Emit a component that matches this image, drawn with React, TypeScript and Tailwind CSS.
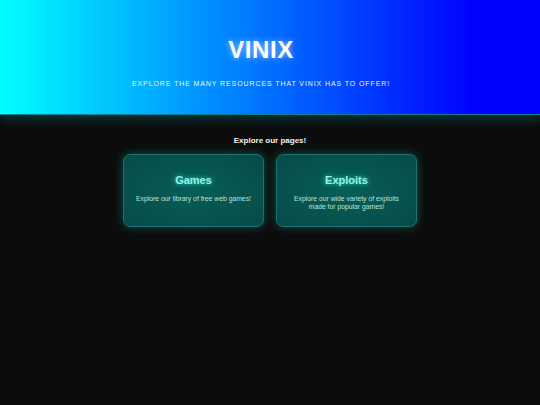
import React from 'react';

interface PageCard {
  title: string;
  description: string;
}

const cards: PageCard[] = [
  { title: 'Games', description: 'Explore our library of free web games!' },
  { title: 'Exploits', description: 'Explore our wide variety of exploits made for popular games!' },
];

const App: React.FC = () => {
  return (
    <div className="min-h-[405px] bg-[#0c0c0c] font-['Liberation_Sans',Arial,sans-serif]">
      {/* Header */}
      <header className="relative h-[115px] pr-[18px] bg-[linear-gradient(to_right,#00ffff,#0000ff_88%)] border-b border-[#0f7f8f] shadow-[0_4px_10px_rgba(0,160,170,0.3)] flex flex-col items-center">
        <h1 className="mt-[36px] text-[24px] leading-[28px] font-bold tracking-[0.6px] text-white [text-shadow:0_0_6px_rgba(255,255,255,0.6)]">
          VINIX
        </h1>
        <p className="mt-[16px] text-[7px] leading-[8px] tracking-[0.9px] text-[#e6f6ff] uppercase">
          Explore the many resources that Vinix has to offer!
        </p>
      </header>

      {/* Pages */}
      <main className="flex flex-col items-center pt-[21px]">
        <h2 className="text-[8px] leading-[10px] font-bold text-[#f0f0f0]">Explore our pages!</h2>
        <div className="mt-[8px] flex gap-[12px]">
          {cards.map((card) => (
            <div
              key={card.title}
              className="w-[141px] h-[73px] rounded-[7px] border border-[#1f716d] bg-[radial-gradient(ellipse_at_center,#065e58,#064b48)] shadow-[0_0_10px_rgba(0,220,200,0.35)] flex flex-col items-center pt-[19px] px-[12px] text-center"
            >
              <h3 className="text-[11px] leading-[13px] font-bold text-[#8ff5ea] [text-shadow:0_0_5px_rgba(80,255,230,0.8)]">
                {card.title}
              </h3>
              <p className="mt-[8px] text-[6.8px] leading-[8px] text-[#bfe0dc]">
                {card.description}
              </p>
            </div>
          ))}
        </div>
      </main>
    </div>
  );
};

export default App;
